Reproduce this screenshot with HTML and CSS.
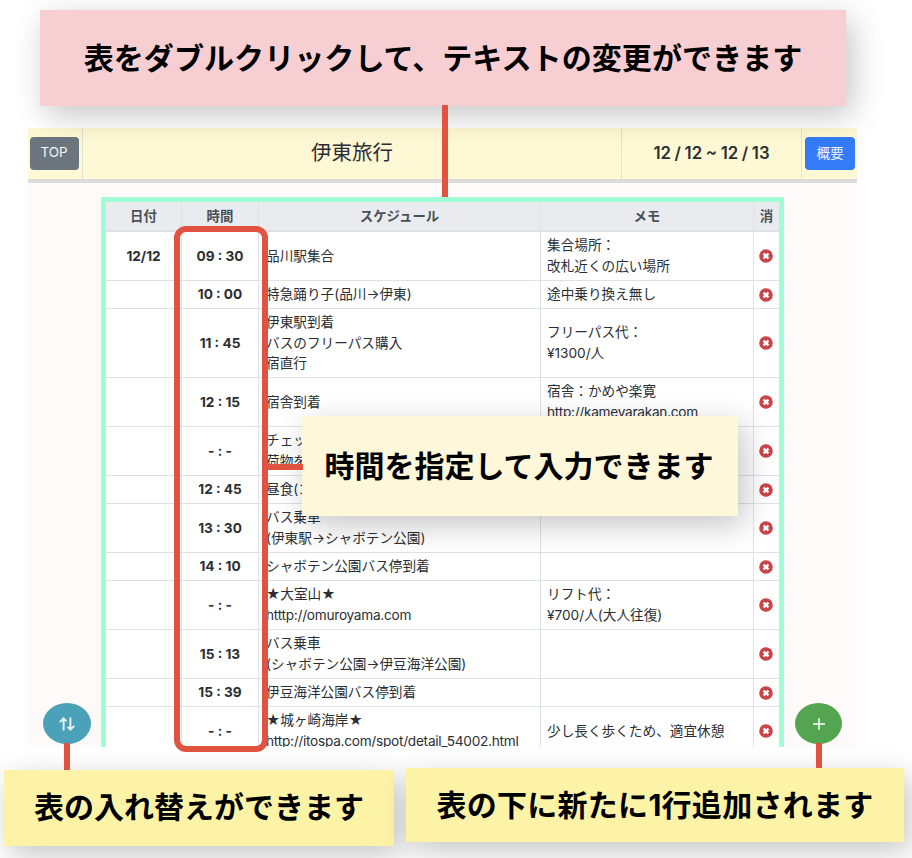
FILE: index.html
```html
<!DOCTYPE html>
<html lang="ja">
<head>
<meta charset="utf-8">
<title>伊東旅行</title>
<link rel="stylesheet" href="styles.css">
</head>
<body>
<svg class="defs" width="0" height="0"><symbol id="x" viewBox="0 0 14 14"><circle cx="7" cy="7" r="6.8" fill="#cb444a"/><path d="M4.6 4.6 9.4 9.4M9.4 4.6 4.6 9.4" stroke="#fff" stroke-width="2.4"/></symbol></svg>
<main class="stage">
  <section class="app">
    <header class="bar">
      <div class="bar-cell bar-top"><button class="btn btn-gray">TOP</button></div>
      <h1 class="bar-cell bar-title">伊東旅行</h1>
      <div class="bar-cell bar-dates">12 / 12 ~ 12 / 13</div>
      <div class="bar-cell bar-info"><button class="btn btn-blue">概要</button></div>
    </header>
    <div class="frame">
      <table class="plan">
        <colgroup><col class="c-date"><col class="c-time"><col class="c-plan"><col class="c-memo"><col class="c-del"></colgroup>
        <thead><tr><th>日付</th><th>時間</th><th>スケジュール</th><th>メモ</th><th>消</th></tr></thead>
        <tbody>
          <tr class="two"><th>12/12</th><th>09 : 30</th><td>品川駅集合</td><td>集合場所：<br>改札近くの広い場所</td><td class="del"><svg><use href="#x"/></svg></td></tr>
          <tr class="one"><th></th><th>10 : 00</th><td>特急踊り子(品川→伊東)</td><td>途中乗り換え無し</td><td class="del"><svg><use href="#x"/></svg></td></tr>
          <tr class="three"><th></th><th>11 : 45</th><td>伊東駅到着<br>バスのフリーパス購入<br>宿直行</td><td>フリーパス代：<br>¥1300/人</td><td class="del"><svg><use href="#x"/></svg></td></tr>
          <tr class="two"><th></th><th>12 : 15</th><td>宿舎到着</td><td>宿舎：かめや楽寛<br><span class="url">http://kameyarakan.com</span></td><td class="del"><svg><use href="#x"/></svg></td></tr>
          <tr class="two"><th></th><th>- : -</th><td>チェック<br>荷物を</td><td></td><td class="del"><svg><use href="#x"/></svg></td></tr>
          <tr class="one"><th></th><th>12 : 45</th><td>昼食(コ</td><td></td><td class="del"><svg><use href="#x"/></svg></td></tr>
          <tr class="two"><th></th><th>13 : 30</th><td>バス乗車<br>(伊東駅→シャボテン公園)</td><td></td><td class="del"><svg><use href="#x"/></svg></td></tr>
          <tr class="one"><th></th><th>14 : 10</th><td>シャボテン公園バス停到着</td><td></td><td class="del"><svg><use href="#x"/></svg></td></tr>
          <tr class="two"><th></th><th>- : -</th><td>★大室山★<br><span class="url">htttp://omuroyama.com</span></td><td>リフト代：<br>¥700/人(大人往復)</td><td class="del"><svg><use href="#x"/></svg></td></tr>
          <tr class="two"><th></th><th>15 : 13</th><td>バス乗車<br>(シャボテン公園→伊豆海洋公園)</td><td></td><td class="del"><svg><use href="#x"/></svg></td></tr>
          <tr class="one"><th></th><th>15 : 39</th><td>伊豆海洋公園バス停到着</td><td></td><td class="del"><svg><use href="#x"/></svg></td></tr>
          <tr class="two"><th></th><th>- : -</th><td>★城ヶ崎海岸★<br><span class="url">http://itospa.com/spot/detail_54002.html</span></td><td>少し長く歩くため、適宜休憩</td><td class="del"><svg><use href="#x"/></svg></td></tr>
        </tbody>
      </table>
    </div>
    <button class="round round-sort"><svg width="18" height="16" viewBox="0 0 18 16"><path d="M5.6 14.5V2.4M1.8 6.2 5.6 2.4 8.4 5.2M12.4 1.5V13.6M9.6 10.8 12.4 13.6 16.2 9.8" fill="none" stroke="#e9f5f8" stroke-width="1.9"/></svg></button>
    <button class="round round-add"><svg width="14" height="14" viewBox="0 0 14 14"><path d="M7 1V13M1 7H13" stroke="#fff" stroke-width="1.4"/></svg></button>
  </section>
  <div class="time-box"></div>
  <div class="note note-edit">表をダブルクリックして、テキストの変更ができます</div>
  <div class="note note-time">時間を指定して入力できます</div>
  <div class="note note-sort">表の入れ替えができます</div>
  <div class="note note-add">表の下に新たに1行追加されます</div>
  <i class="line line-edit"></i>
  <i class="line line-time"></i>
  <i class="line line-sort"></i>
  <i class="line line-add"></i>
</main>
</body>
</html>
```
FILE: styles.css
```css
* { box-sizing: border-box; }
body { margin: 0; background: #fff; font-family: Inter, "Noto Sans CJK JP", sans-serif; color: #2b2f33; }
.defs { position: absolute; }
.stage { position: relative; width: 912px; height: 858px; padding: 128px 0 0 28px; overflow: hidden; }
.app { position: relative; width: 829px; height: 619px; overflow: hidden; background: #fffafa; }

.bar { display: grid; grid-template-columns: 55px 539px 180px 55px; height: 55px; background: #fff8d4; border-bottom: 4px solid #dcdcdc; }
.bar-cell { display: flex; align-items: center; justify-content: center; border-right: 1px solid #e2e2dc; padding-bottom: 1px; }
.bar-info { border-right: 0; padding-left: 1px; }
.bar-top { padding-right: 2px; }
.bar-title { margin: 0; font-size: 20.5px; font-weight: 400; line-height: 24px; }
.bar-dates { font-size: 16.8px; font-weight: 600; word-spacing: -.6px; }
.btn { height: 33px; padding: 0 0 2px; border: 0; border-radius: 4px; color: #f4f6f8; font: 13.6px Inter, "Noto Sans CJK JP", sans-serif; }
.btn-gray { width: 49px; background: #6c757d; font-size: 13.4px; }
.btn-blue { width: 50px; background: #337bf7; }

.frame { width: 683px; margin: 14px 0 0 73px; border: 5px solid #a0fdd5; background: #fff; }
.plan { width: 673px; table-layout: fixed; border-collapse: separate; border-spacing: 0; font-size: 13.65px; line-height: 20.6px; }
.c-date { width: 76px; }
.c-time { width: 77px; }
.c-plan { width: 282px; }
.c-memo { width: 213px; }
.c-del { width: 25px; }
.plan th, .plan td { padding: 0; border-right: 1px solid #dee2e6; border-bottom: 1px solid #dee2e6; vertical-align: middle; white-space: nowrap; }
.plan th:last-child, .plan td:last-child { border-right: 0; }
.plan thead th { height: 30px; background: #e9ebef; border-bottom: 2px solid #dee2e6; color: #495057; font-size: 13.4px; font-weight: 700; }
.plan tbody th { font-weight: 700; }
.plan tbody td { padding-left: 6px; }
.plan tbody td:nth-child(3) { padding-left: 7px; }
.plan tbody .del { padding: 0; text-align: center; }
.del svg { display: block; width: 14px; height: 14px; margin: 0 0 0 5px; }
.url { letter-spacing: -.26px; }
.one { height: 28px; }
.two { height: 49px; }
.three { height: 69px; }

.round { position: absolute; top: 575px; height: 41px; padding: 0; border: 0; border-radius: 50%; display: flex; align-items: center; justify-content: center; }
.round-sort { left: 15px; width: 48px; background: #4aa1b8; }
.round-add { left: 767px; width: 47px; background: #53a551; }

.time-box { position: absolute; left: 174px; top: 226px; width: 94px; height: 526px; border: 6px solid #e15241; border-radius: 12px; }
.note { position: absolute; display: flex; align-items: center; justify-content: center; color: #000; font-size: 30px; font-weight: 700; line-height: 40px; white-space: nowrap; box-shadow: 6px 9px 30px rgba(0, 0, 0, .23); }
.note-edit { left: 40px; top: 10px; width: 806px; height: 96px; background: #f7ced2; font-size: 30.08px; }
.note-time { left: 302px; top: 416px; width: 436px; height: 100px; background: #fef7da; padding-right: 2px; }
.note-sort { left: 4px; top: 770px; width: 390px; height: 76px; background: #fdf3a7; padding-bottom: 3px; }
.note-add { left: 406px; top: 768px; width: 498px; height: 74px; background: #fdf3a7; padding-bottom: 1px; letter-spacing: .27px; }
.line { position: absolute; background: #e15241; }
.line-edit { left: 442px; top: 105px; width: 6px; height: 92px; }
.line-time { left: 267px; top: 464px; width: 36px; height: 6px; }
.line-sort { left: 64px; top: 743px; width: 6px; height: 27px; }
.line-add { left: 816px; top: 743px; width: 6px; height: 25px; }
```
